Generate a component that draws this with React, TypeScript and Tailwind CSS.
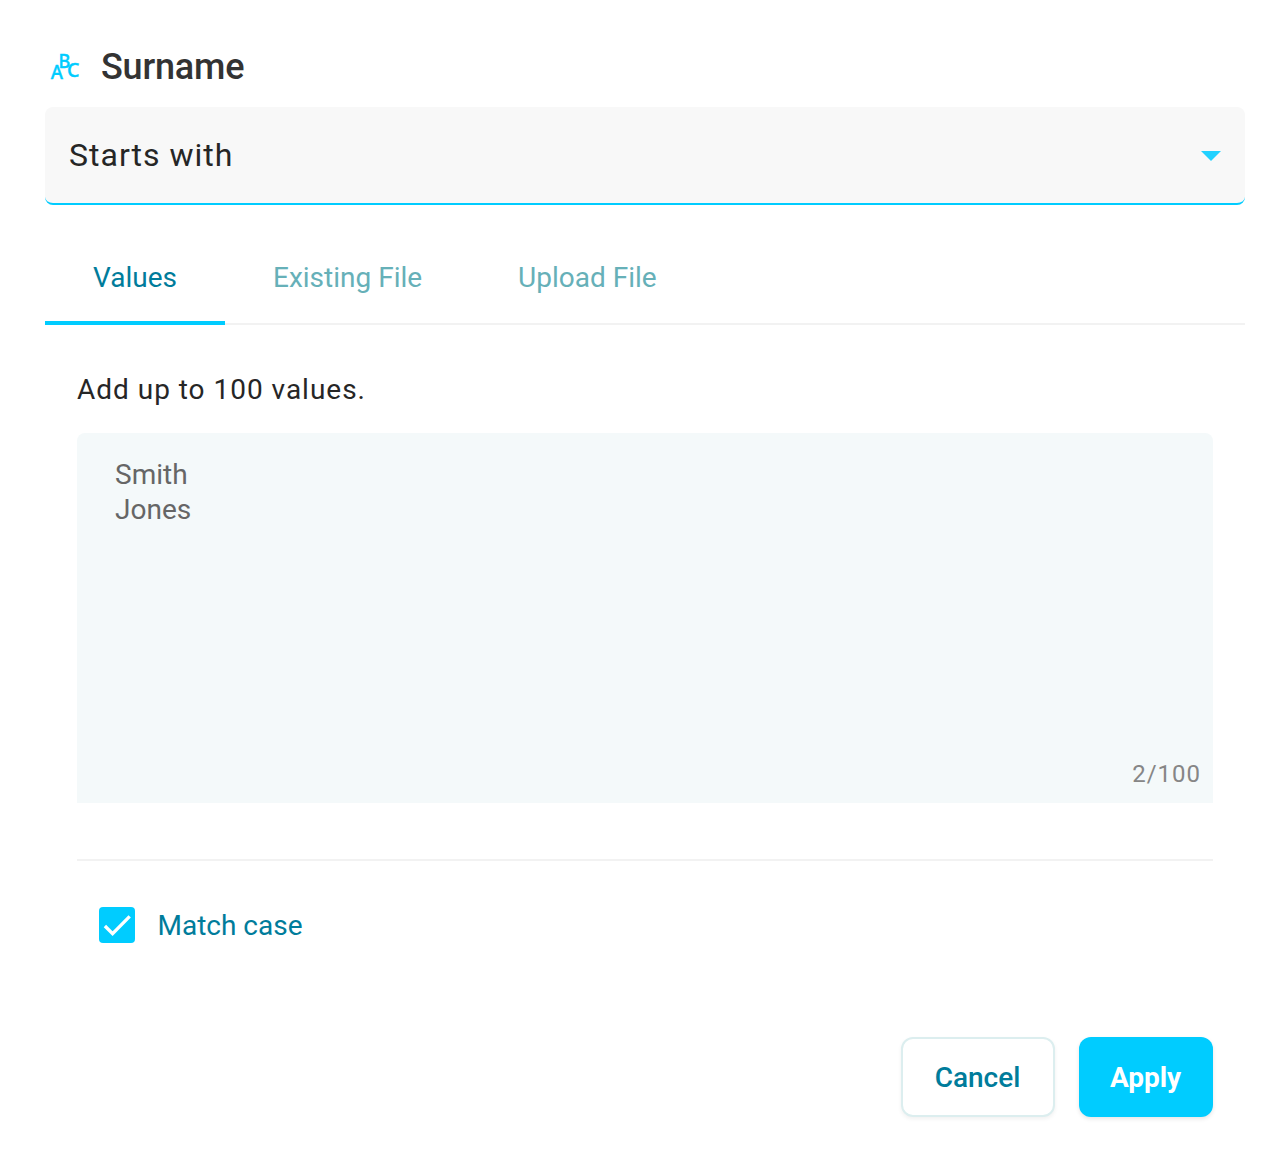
import { useState } from "react";

const TABS = ["Values", "Existing File", "Upload File"];

function AbcIcon() {
  return (
    <svg
      width="36"
      height="36"
      viewBox="0 0 36 36"
      className="overflow-visible"
      fill="#00ccff"
      fontFamily="'Noto Sans', sans-serif"
      fontWeight="500"
      fontSize="19"
      stroke="#00ccff"
      strokeWidth="0.4"
      aria-hidden="true"
    >
      <text x="3.8" y="30" textLength="12.2" lengthAdjust="spacingAndGlyphs">A</text>
      <text x="11.4" y="18.6" textLength="11.8" lengthAdjust="spacingAndGlyphs">B</text>
      <text x="20" y="28.2" textLength="12.4" lengthAdjust="spacingAndGlyphs">C</text>
    </svg>
  );
}

export default function App() {
  const [tab, setTab] = useState("Values");
  const [text, setText] = useState("Smith\nJones");
  const [matchCase, setMatchCase] = useState(true);
  const count = text.split("\n").filter(Boolean).length;

  return (
    <main className="flex h-[1155px] w-[1288px] flex-col bg-white pr-[43px] pl-[45px] font-['Roboto',sans-serif] text-[28px]">
      <header className="mt-[47px] flex h-10 items-center gap-[18px] pl-0.5">
        <AbcIcon />
        <h1 className="text-[36px] leading-10 font-medium tracking-[-0.2px] text-[#333333]">Surname</h1>
      </header>

      <button className="mt-5 flex h-[98px] shrink-0 items-center justify-between rounded-lg border-b-2 border-[#00ccff] bg-[#f8f8f8] pr-6 pl-6 text-left">
        <span className="text-[32px] leading-10 tracking-[1px] text-[#262626]">Starts with</span>
        <svg width="20" height="10" viewBox="0 0 20 10" className="mt-0.5" aria-hidden="true">
          <path d="M0 0h20L10 10z" fill="#22d1ff" />
        </svg>
      </button>

      <nav className="mt-6 flex h-24 shrink-0 shadow-[inset_0_-2px_0_#f2f2f2]">
        {TABS.map((name) => (
          <button
            key={name}
            onClick={() => setTab(name)}
            className={
              name === tab
                ? "border-b-4 border-[#00ccff] px-12 pt-1.5 text-[#007c9b]"
                : "border-b-4 border-transparent px-12 pt-1.5 text-[#66b0b8]"
            }
          >
            {name}
          </button>
        ))}
      </nav>

      <section className="flex flex-col px-8">
        <p className="mt-[45px] h-10 leading-10 tracking-[0.98px] text-[#262626]">Add up to 100 values.</p>
        <div className="mt-[23px] flex h-[370px] flex-col rounded-t-lg bg-[#f4f9fa] pt-6 pr-3 pb-[9px] pl-[38px]">
          <textarea
            value={text}
            onChange={(e) => setText(e.target.value)}
            spellCheck={false}
            className="w-full flex-1 resize-none leading-[35px] text-[#666666] outline-none"
          />
          <span className="self-end text-[24px] leading-10 tracking-[1px] text-[#868686]">{count}/100</span>
        </div>

        <hr className="mt-14 border-t-2 border-[#f2f2f2]" />

        <label className="mt-[46px] ml-[22px] flex h-9 items-center gap-[22px] text-[#007c9b]">
          <input
            type="checkbox"
            checked={matchCase}
            onChange={() => setMatchCase(!matchCase)}
            className="peer sr-only"
          />
          <span className="flex size-9 items-center justify-center rounded bg-[#00ccff]">
            {matchCase && (
              <svg width="36" height="36" viewBox="0 0 36 36" fill="none" aria-hidden="true">
                <path d="M5.9 19 13.6 26.7 30.7 9.4" stroke="white" strokeWidth="3.3" />
              </svg>
            )}
          </span>
          <span className="pt-0.5 pl-[0.5px]">Match case</span>
        </label>

        <footer className="mt-[94px] flex justify-end gap-6 font-medium">
          <button className="h-20 w-[154px] rounded-xl border-2 border-[#dceeef] bg-white pt-0.5 pr-px text-[#007c9b] shadow-[0_2px_4px_rgba(0,0,0,0.06)]">
            Cancel
          </button>
          <button className="h-20 w-[134px] rounded-xl bg-[#00ccff] pt-0.5 pr-px font-bold tracking-[-0.1px] text-white shadow-[0_2px_4px_rgba(0,0,0,0.1)]">
            Apply
          </button>
        </footer>
      </section>
    </main>
  );
}
